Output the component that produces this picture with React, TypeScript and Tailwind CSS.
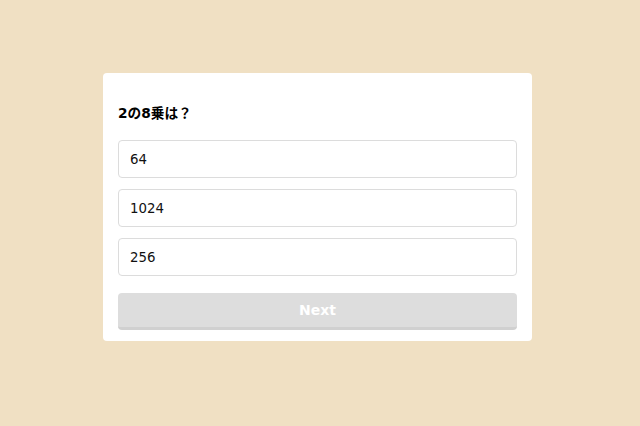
const options = ["64", "1024", "256"];

export default function App() {
  return (
    <div className="flex h-[426px] w-[640px] items-start bg-[#f0e0c3] pl-[103px] pt-[73px] [font-family:'DejaVu_Sans','Noto_Sans_CJK_JP',sans-serif]">
      <div className="flex w-[429px] flex-col rounded-[4px] bg-white px-[15px] pb-[11px] pt-[31px]">
        <div className="text-[13.7px] font-bold leading-[18px] text-black">2の8乗は？</div>
        <div className="mt-[18px] flex flex-col gap-[11px]">
          {options.map((o) => (
            <div
              key={o}
              className="flex h-[38px] items-center rounded-[4px] border border-[#dcdcdc] px-[11px] pt-[2px] text-[13.33px] text-[#111]"
            >
              {o}
            </div>
          ))}
        </div>
        <button className="mt-[17px] h-[37px] w-full rounded-[4px] border-b-[3px] border-[#d0d0d0] bg-[#dddddd] text-[14px] font-bold text-white">
          Next
        </button>
      </div>
    </div>
  );
}
